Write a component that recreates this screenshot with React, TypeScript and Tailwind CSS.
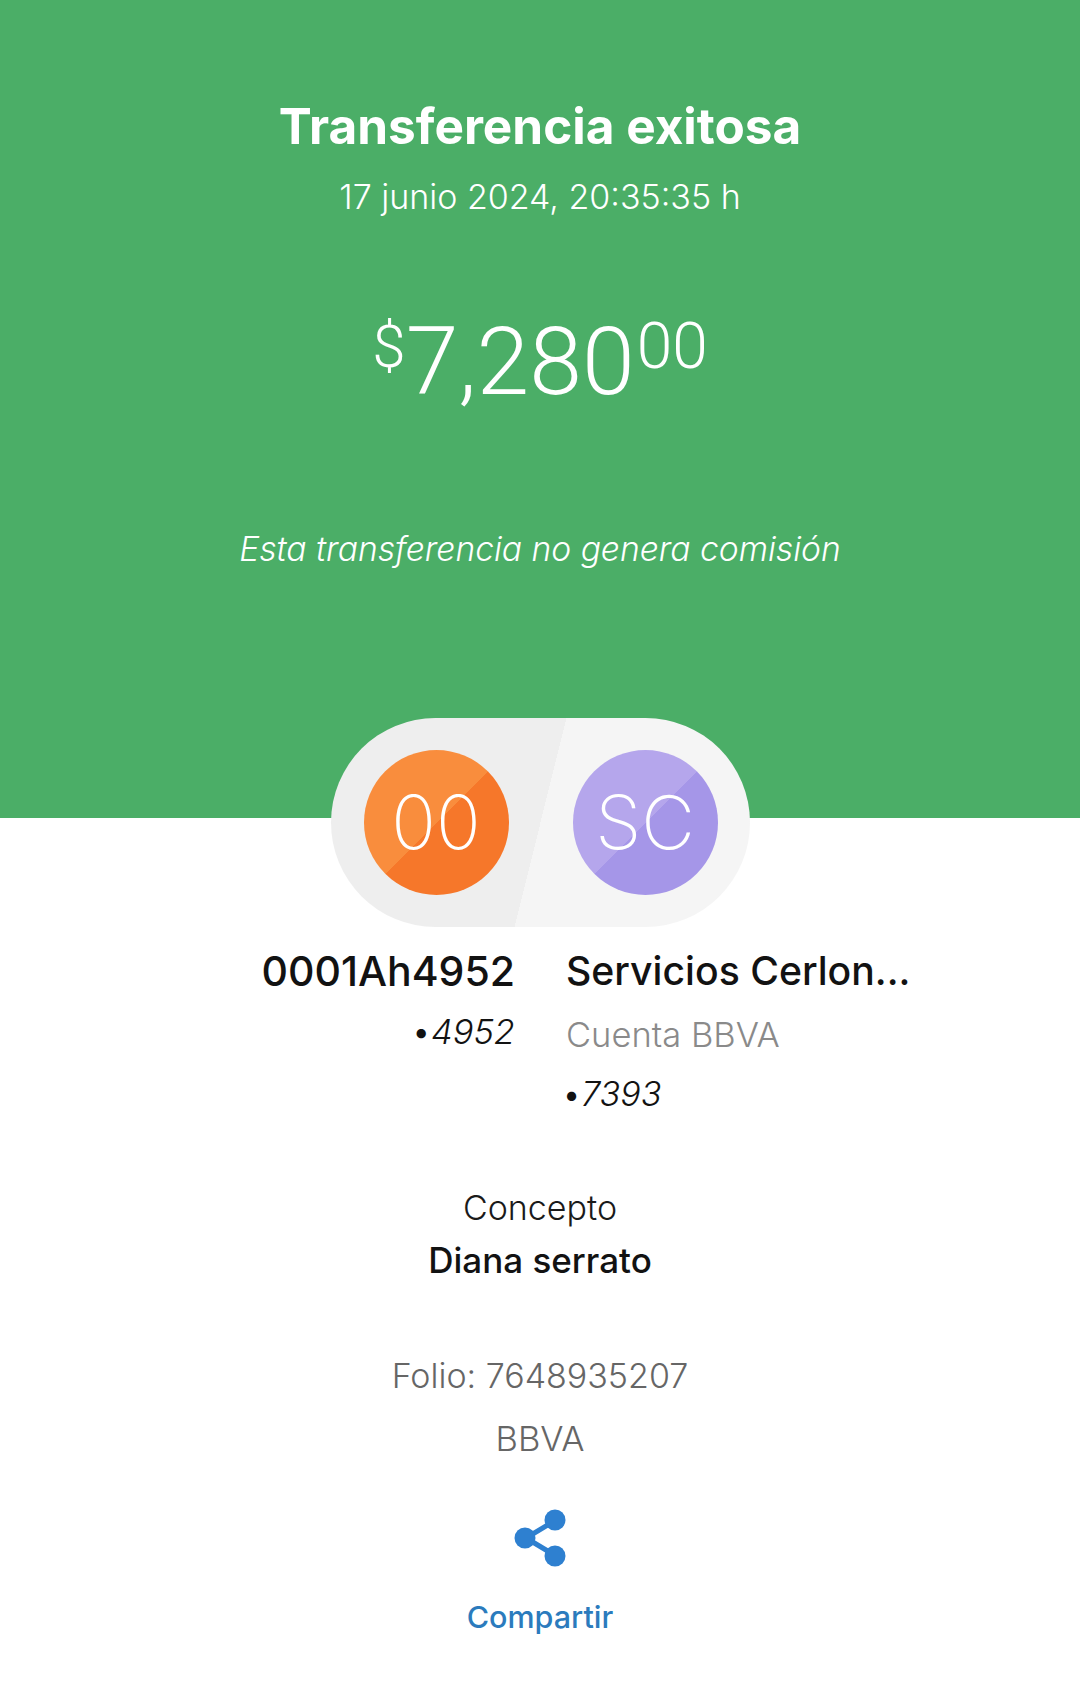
const thin = "font-light";

function Avatar({ label, className }: { label: string; className: string }) {
  return (
    <div className={`flex h-[145px] w-[145px] items-center justify-center rounded-full text-[74px] font-[250] text-white ${className}`}>
      {label}
    </div>
  );
}

export default function App() {
  return (
    <div className="min-h-[1683px] w-[1080px] bg-white text-center font-['Inter',sans-serif]">
      <section className="flex h-[818px] flex-col items-center bg-[#4bae67] pt-[96px] text-white">
        <h1 className="text-[49.5px] font-bold leading-[60px]">Transferencia exitosa</h1>
        <p className={`mt-[21px] text-[34px] leading-[40px] ${thin}`}>17 junio 2024, 20:35:35 h</p>
        <div className="mt-[95px] flex items-start font-['Roboto',sans-serif] font-light">
          <span className="mt-[5px] text-[60px] leading-[60px]">$</span>
          <span className="text-[95px] leading-[100px]">7,280</span>
          <span className="ml-[2px] mt-[5px] text-[64px] leading-[60px]">00</span>
        </div>
        <p className={`mt-[115px] text-[33.6px] italic leading-[44px] ${thin}`}>Esta transferencia no genera comisión</p>
      </section>

      <div className="mx-auto -mt-[100px] flex h-[209px] w-[419px] items-center justify-between rounded-full bg-[linear-gradient(104deg,#eeeeee_50%,#f5f5f5_50%)] pl-[33px] pr-[32px]">
        <Avatar label="00" className="bg-[linear-gradient(135deg,#f98d3d_50%,#f6772a_50%)]" />
        <Avatar label="SC" className="bg-[linear-gradient(135deg,#b5a6ec_50%,#a596e8_50%)]" />
      </div>

      <div className="mt-[18px] grid grid-cols-[515px_1fr] gap-x-[51px] text-left">
        <div className="text-right">
          <p className="text-[41px] font-medium leading-[52px] text-[#121212]">0001Ah4952</p>
          <p className={`mt-[13px] text-[34.5px] italic leading-[44px] text-[#121212] ${thin}`}>
            <span className="not-italic">•</span>4952
          </p>
        </div>
        <div>
          <p className="text-[39.2px] font-medium leading-[52px] text-[#121212]">Servicios Cerlon...</p>
          <p className={`mt-[16px] text-[34.5px] leading-[44px] text-[#8a8a8a] ${thin}`}>Cuenta BBVA</p>
          <p className={`-ml-[4px] mt-[15px] text-[34px] italic leading-[44px] text-[#121212] ${thin}`}>
            <span className="not-italic">•</span>7393
          </p>
        </div>
      </div>

      <p className={`mt-[70px] text-[34px] leading-[44px] text-[#1a1a1a] ${thin}`}>Concepto</p>
      <p className="mt-[8px] text-[35px] font-medium leading-[44px] text-[#121212]">Diana serrato</p>

      <p className={`mt-[72px] text-[34px] leading-[44px] text-[#666666] ${thin}`}>Folio: 7648935207</p>
      <p className={`mt-[19px] text-[34.5px] leading-[44px] text-[#666666] ${thin}`}>BBVA</p>

      <svg viewBox="0 0 52 58" className="mx-auto mt-[48px] h-[58px] w-[52px] fill-[#2e80d0] stroke-[#2e80d0]">
        <path d="M12 29 L42 11 M12 29 L42 47" strokeWidth="5" fill="none" />
        <circle cx="11" cy="29" r="10.5" strokeWidth="0" />
        <circle cx="41" cy="11" r="10.5" strokeWidth="0" />
        <circle cx="41" cy="47" r="10.5" strokeWidth="0" />
      </svg>

      <p className="mt-[30px] text-[30.5px] font-medium leading-[40px] text-[#2b7bbd]">Compartir</p>
    </div>
  );
}
